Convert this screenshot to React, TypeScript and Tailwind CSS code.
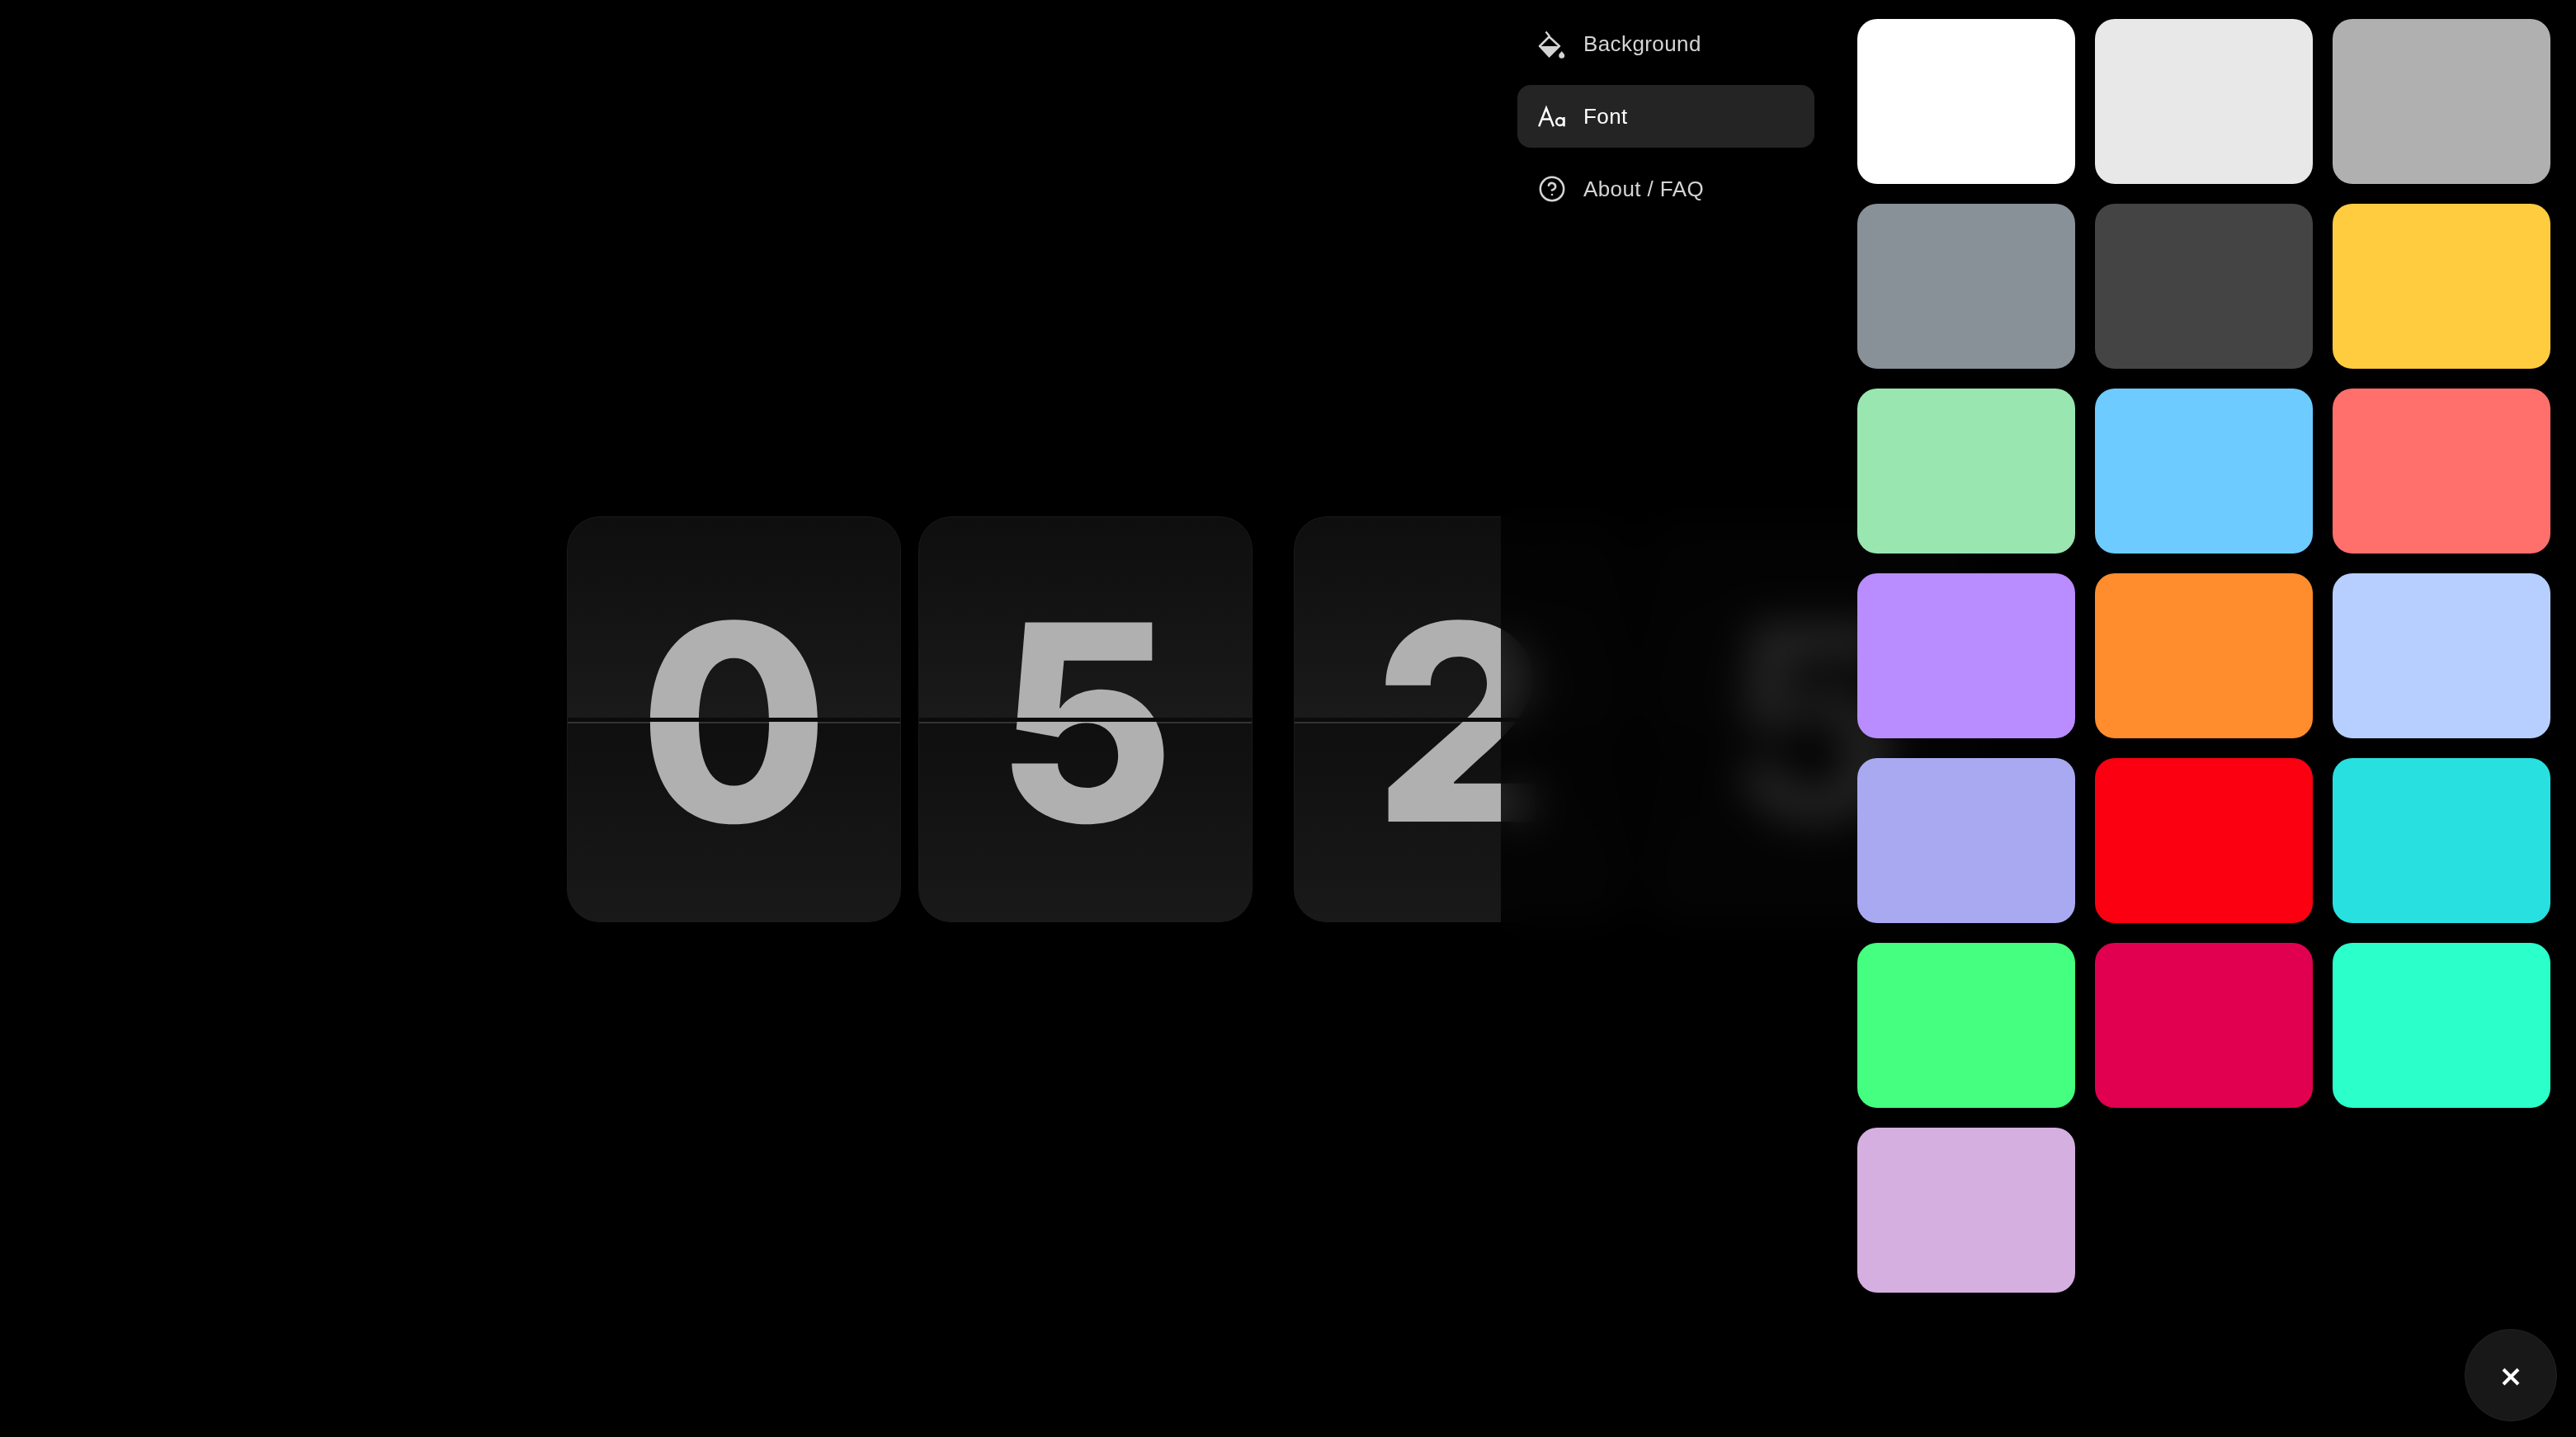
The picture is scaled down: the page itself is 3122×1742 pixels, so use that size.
import React from "react";
import { CircleHelp } from "lucide-react";

const swatches = [
  "bg-[#ffffff]", "bg-[#e8e8e8]", "bg-[#b0b0b0]",
  "bg-[#889098]", "bg-[#444444]", "bg-[#ffcc40]",
  "bg-[#99e6b0]", "bg-[#6dcbff]", "bg-[#ff6f6b]",
  "bg-[#b98cff]", "bg-[#ff8c2d]", "bg-[#b6cfff]",
  "bg-[#a9a9f2]", "bg-[#fa0010]", "bg-[#28e0e0]",
  "bg-[#44ff80]", "bg-[#e0004f]", "bg-[#2bffca]",
  "bg-[#d5afe0]",
];

function Card({ d }: { d: string }) {
  return (
    <div className="relative flex h-[492px] w-[405px] flex-col overflow-hidden rounded-[40px]">
      <div className="h-[244px] bg-gradient-to-b from-[#0e0e0e] to-[#1a1a1a]" />
      <div className="h-[5px] bg-[#0b0b0b]" />
      <div className="flex-1 border-t-2 border-[#333333] bg-gradient-to-b from-[#0f0f0f] to-[#191919]" />
      <div className="absolute inset-0 flex items-center justify-center pt-[6px] font-['Inter',sans-serif] text-[332px] leading-none font-extrabold text-[#b0b0b0]">
        {d}
      </div>
      <div className="absolute inset-x-0 top-[244px] h-[5px] bg-[#0b0b0b]" />
      <div className="absolute inset-0 rounded-[40px] border border-[#1a1a1a]" />
    </div>
  );
}

function BucketIcon() {
  return (
    <svg width="34" height="34" viewBox="0 0 34 34" className="overflow-visible">
      <path d="M9.5 2.5L14 8" stroke="#d4d4d4" strokeWidth="2.4" fill="none" />
      <path d="M1.5 20.5L13.5 8.5L26.5 20.5" stroke="#d4d4d4" strokeWidth="2.6" fill="none" />
      <path d="M0.5 20H27.5L13.5 34Z" fill="#d4d4d4" />
      <path d="M28.7 26C30.2 28 32.2 29.3 32.2 31.2A3.5 3.5 0 0 1 25.2 31.2C25.2 29.3 27.2 28 28.7 26Z" fill="#d4d4d4" />
    </svg>
  );
}

function FontIcon() {
  return (
    <svg width="34" height="34" viewBox="0 0 34 34" fill="none" stroke="#ffffff" strokeWidth="2.5" className="overflow-visible">
      <path d="M1.2 29.3L10 7L18.8 29.3" />
      <path d="M4.5 20.5H15.5" />
      <circle cx="26.7" cy="23.5" r="4.5" />
      <path d="M31.5 18V29.3" />
    </svg>
  );
}

export default function App() {
  return (
    <div className="relative h-[1742px] w-[3122px] overflow-hidden bg-black font-['Liberation_Sans',sans-serif]">
      <div className="flex h-full items-center pt-[2px] pl-[687px]">
        <div className="flex gap-[21px]">
          <Card d="0" />
          <Card d="5" />
        </div>
        <div className="ml-[50px] flex gap-[21px]">
          <Card d="2" />
          <Card d="5" />
        </div>
      </div>

      <div className="absolute inset-y-0 right-0 left-[1819px] flex gap-[52px] bg-black/80 pl-[20px] backdrop-blur-[24px]">
        <nav className="flex w-[360px] flex-col gap-[12px] pt-[15px] text-[26px] tracking-[0.4px]">
          <a className="flex h-[76px] items-center gap-[21px] rounded-[16px] pl-[25px] text-[#d4d4d4]">
            <BucketIcon />
            <span>Background</span>
          </a>
          <a className="flex h-[76px] items-center gap-[21px] rounded-[16px] bg-[#242424] pl-[25px] text-white">
            <FontIcon />
            <span>Font</span>
          </a>
          <a className="flex h-[76px] items-center gap-[21px] rounded-[16px] pl-[25px] text-[#d4d4d4]">
            <span className="flex w-[34px] items-center justify-center">
              <CircleHelp size={34} strokeWidth={1.8} />
            </span>
            <span>About / FAQ</span>
          </a>
        </nav>
        <div className="grid h-fit w-[840px] grid-cols-3 gap-[24px] pt-[23px]">
          {swatches.map((c, i) => (
            <div key={i} className={`h-[200px] rounded-[24px] ${c}`} />
          ))}
        </div>
      </div>

      <button className="absolute right-[23px] bottom-[19px] flex h-[112px] w-[112px] items-center justify-center rounded-full border border-[#222222] bg-[#181818] pt-[3px]">
        <svg width="22" height="22" viewBox="0 0 22 22" stroke="#ffffff" strokeWidth="4" fill="none">
          <path d="M2 2L20 20M20 2L2 20" />
        </svg>
      </button>
    </div>
  );
}
